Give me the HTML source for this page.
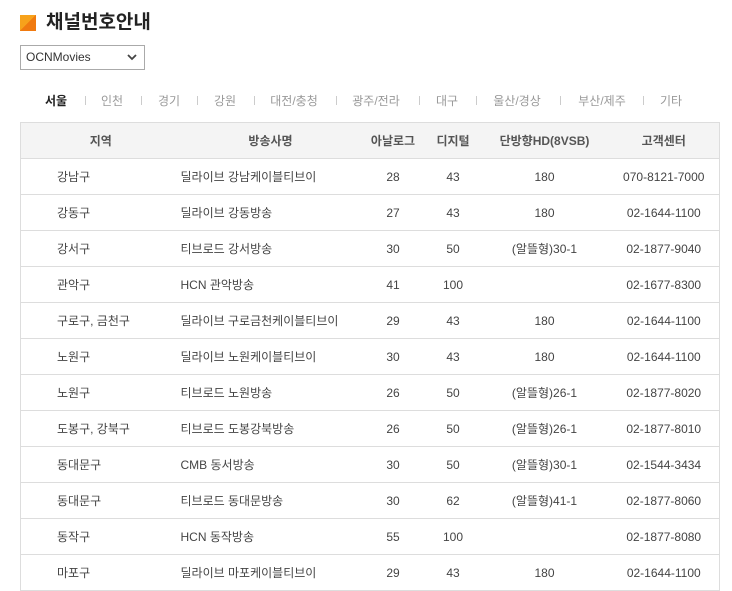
<!DOCTYPE html>
<html><head><meta charset="utf-8"><style>
body{margin:0;width:732px;height:588px;overflow:hidden;background:#fff;font-family:"Liberation Sans","Noto Sans CJK KR","NanumGothic",sans-serif;color:#333;position:relative}
.sq{position:absolute;left:20px;top:15px;width:16px;height:16px;background:linear-gradient(135deg,#f7a21b 50%,#f07a10 50%)}
h1{position:absolute;left:46px;top:9px;margin:0;font-size:19px;font-weight:bold;color:#222;line-height:28px}
.sel{position:absolute;left:20px;top:45px;width:125px;height:25px;border:1px solid #aaa;box-sizing:border-box;font-size:12px;line-height:23px;padding-left:5px;color:#333}
.sel svg{position:absolute;right:7px;top:8px}
.tab{position:absolute;top:92px;font-size:12px;color:#999;transform:translateX(-50%);white-space:nowrap}
.tab.on{color:#222;font-weight:bold}
.sp{position:absolute;top:96px;width:1px;height:9px;background:#ccc}
table{position:absolute;left:20px;top:122px;width:699px;border-collapse:collapse;font-size:12px;table-layout:fixed}
td,th{height:35px;border-top:1px solid #ddd;border-bottom:1px solid #ddd;padding:0;text-align:center;color:#444;white-space:nowrap}
th{background:#f4f4f4;font-weight:bold;color:#555;font-size:12px}
tr td:first-child,tr th:first-child{border-left:1px solid #ddd}
tr td:last-child,tr th:last-child{border-right:1px solid #ddd}
td.l1{text-align:left;padding-left:36px}
td.l2{text-align:left}
</style></head><body>
<div class="sq"></div><h1>채널번호안내</h1>
<div class="sel">OCNMovies<svg width="10" height="7" viewBox="0 0 10 7"><path d="M1 1l4 4 4-4" stroke="#444" stroke-width="1.8" fill="none"/></svg></div>
<span class="tab on" style="left:56px">서울</span><span class="sp" style="left:85px"></span>
<span class="tab" style="left:112px">인천</span><span class="sp" style="left:141px"></span>
<span class="tab" style="left:169px">경기</span><span class="sp" style="left:197px"></span>
<span class="tab" style="left:225px">강원</span><span class="sp" style="left:254px"></span>
<span class="tab" style="left:294px">대전/충청</span><span class="sp" style="left:336px"></span>
<span class="tab" style="left:376px">광주/전라</span><span class="sp" style="left:419px"></span>
<span class="tab" style="left:447px">대구</span><span class="sp" style="left:476px"></span>
<span class="tab" style="left:517px">울산/경상</span><span class="sp" style="left:560px"></span>
<span class="tab" style="left:602px">부산/제주</span><span class="sp" style="left:643px"></span>
<span class="tab" style="left:671px">기타</span>
<table>
<colgroup><col style="width:160px"><col style="width:180px"><col style="width:65px"><col style="width:55px"><col style="width:128px"><col style="width:111px"></colgroup>
<tr><th>지역</th><th>방송사명</th><th>아날로그</th><th>디지털</th><th>단방향HD(8VSB)</th><th>고객센터</th></tr>
<tr><td class="l1">강남구</td><td class="l2">딜라이브 강남케이블티브이</td><td>28</td><td>43</td><td>180</td><td>070-8121-7000</td></tr>
<tr><td class="l1">강동구</td><td class="l2">딜라이브 강동방송</td><td>27</td><td>43</td><td>180</td><td>02-1644-1100</td></tr>
<tr><td class="l1">강서구</td><td class="l2">티브로드 강서방송</td><td>30</td><td>50</td><td>(알뜰형)30-1</td><td>02-1877-9040</td></tr>
<tr><td class="l1">관악구</td><td class="l2">HCN 관악방송</td><td>41</td><td>100</td><td></td><td>02-1677-8300</td></tr>
<tr><td class="l1">구로구, 금천구</td><td class="l2">딜라이브 구로금천케이블티브이</td><td>29</td><td>43</td><td>180</td><td>02-1644-1100</td></tr>
<tr><td class="l1">노원구</td><td class="l2">딜라이브 노원케이블티브이</td><td>30</td><td>43</td><td>180</td><td>02-1644-1100</td></tr>
<tr><td class="l1">노원구</td><td class="l2">티브로드 노원방송</td><td>26</td><td>50</td><td>(알뜰형)26-1</td><td>02-1877-8020</td></tr>
<tr><td class="l1">도봉구, 강북구</td><td class="l2">티브로드 도봉강북방송</td><td>26</td><td>50</td><td>(알뜰형)26-1</td><td>02-1877-8010</td></tr>
<tr><td class="l1">동대문구</td><td class="l2">CMB 동서방송</td><td>30</td><td>50</td><td>(알뜰형)30-1</td><td>02-1544-3434</td></tr>
<tr><td class="l1">동대문구</td><td class="l2">티브로드 동대문방송</td><td>30</td><td>62</td><td>(알뜰형)41-1</td><td>02-1877-8060</td></tr>
<tr><td class="l1">동작구</td><td class="l2">HCN 동작방송</td><td>55</td><td>100</td><td></td><td>02-1877-8080</td></tr>
<tr><td class="l1">마포구</td><td class="l2">딜라이브 마포케이블티브이</td><td>29</td><td>43</td><td>180</td><td>02-1644-1100</td></tr>
</table>
</body></html>
